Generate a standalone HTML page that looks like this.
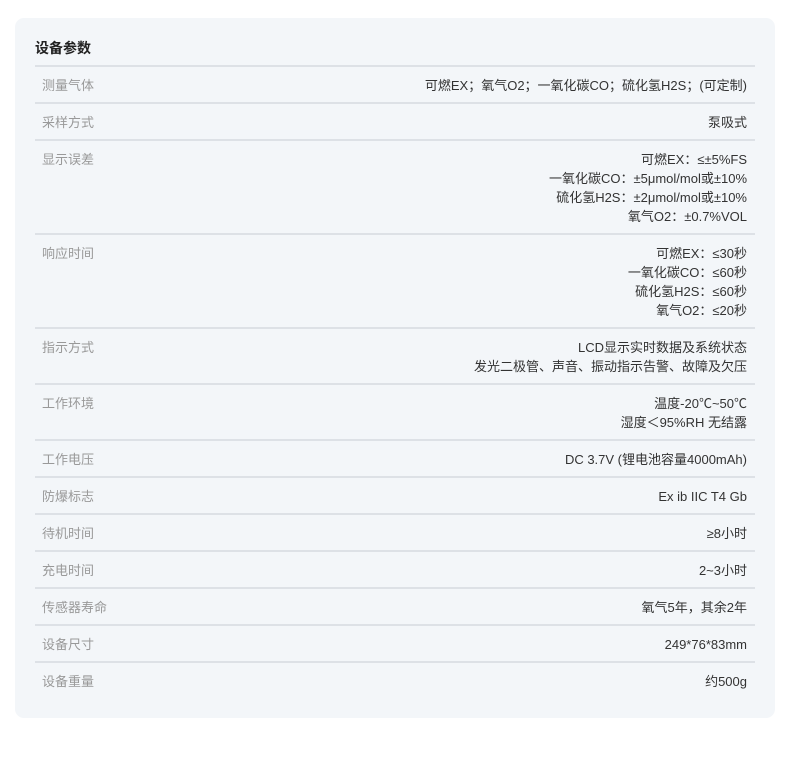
<!DOCTYPE html>
<html><head><meta charset="utf-8"><style>
body{margin:0;background:#fff;width:790px;height:757px;font-family:"Liberation Sans","Noto Sans CJK SC",sans-serif;}
.card{position:absolute;left:15px;top:18px;width:760px;height:700px;background:#f3f6f9;border-radius:9px;}
.t{position:absolute;left:20px;top:20px;font-size:14px;font-weight:bold;color:#222;line-height:20px;}
.tbl{position:absolute;left:20px;top:47px;width:720px;}
.r{border-top:2px solid #dde1e6;padding:9px 8px 7px 7px;display:flex;justify-content:space-between;font-size:13px;line-height:19px;}
.l{color:#999;}
.v{color:#333;text-align:right;}
</style></head><body>
<div class="card">
<div class="t">设备参数</div>
<div class="tbl">
<div class="r"><span class="l">测量气体</span><span class="v">可燃EX；氧气O2；一氧化碳CO；硫化氢H2S；(可定制)</span></div>
<div class="r"><span class="l">采样方式</span><span class="v">泵吸式</span></div>
<div class="r"><span class="l">显示误差</span><span class="v">可燃EX：≤±5%FS<br>一氧化碳CO：±5μmol/mol或±10%<br>硫化氢H2S：±2μmol/mol或±10%<br>氧气O2：±0.7%VOL</span></div>
<div class="r"><span class="l">响应时间</span><span class="v">可燃EX：≤30秒<br>一氧化碳CO：≤60秒<br>硫化氢H2S：≤60秒<br>氧气O2：≤20秒</span></div>
<div class="r"><span class="l">指示方式</span><span class="v">LCD显示实时数据及系统状态<br>发光二极管、声音、振动指示告警、故障及欠压</span></div>
<div class="r"><span class="l">工作环境</span><span class="v">温度-20℃~50℃<br>湿度＜95%RH 无结露</span></div>
<div class="r"><span class="l">工作电压</span><span class="v">DC 3.7V (锂电池容量4000mAh)</span></div>
<div class="r"><span class="l">防爆标志</span><span class="v">Ex ib IIC T4 Gb</span></div>
<div class="r"><span class="l">待机时间</span><span class="v">≥8小时</span></div>
<div class="r"><span class="l">充电时间</span><span class="v">2~3小时</span></div>
<div class="r"><span class="l">传感器寿命</span><span class="v">氧气5年，其余2年</span></div>
<div class="r"><span class="l">设备尺寸</span><span class="v">249*76*83mm</span></div>
<div class="r"><span class="l">设备重量</span><span class="v">约500g</span></div>
</div>
</div>
</body></html>
